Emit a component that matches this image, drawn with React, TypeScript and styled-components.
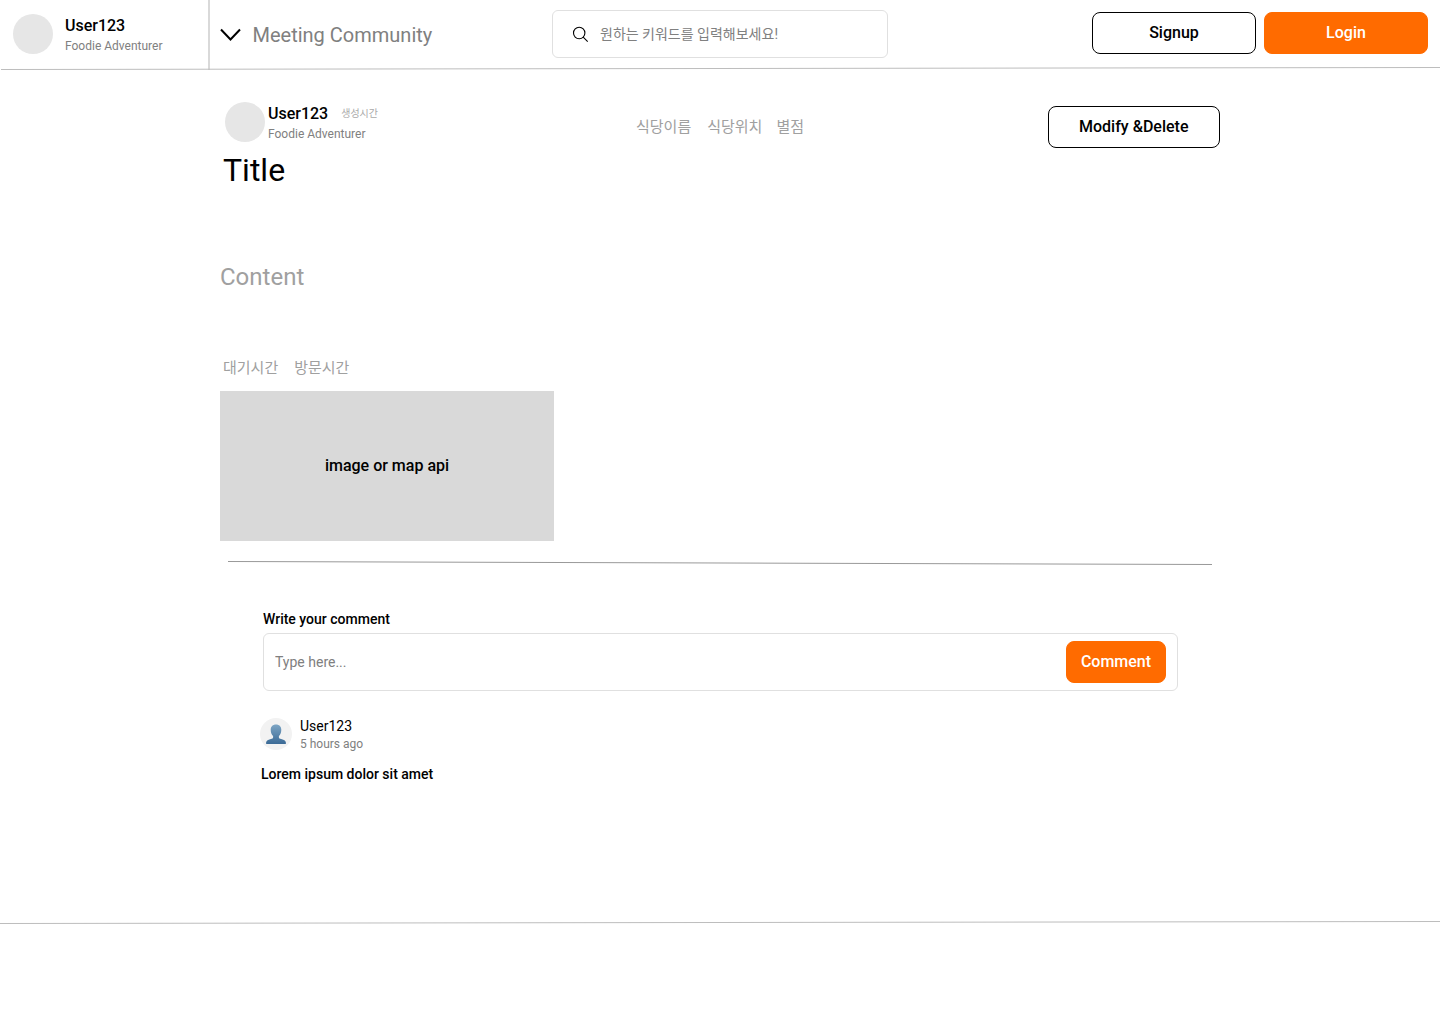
import React from "react";
import styled, { createGlobalStyle } from "styled-components";

const GlobalStyle = createGlobalStyle`
  *, *::before, *::after { box-sizing: border-box; }
  body {
    margin: 0;
    background: #fff;
    color: #000;
    font-family: Roboto, "Noto Sans CJK KR", sans-serif;
  }
  button, input { font-family: inherit; }
`;

const Page = styled.div`
  display: flex;
  flex-direction: column;
  width: 1440px;
  height: 1024px;
  overflow: hidden;
`;

const Header = styled.header`
  display: grid;
  grid-template-columns: 208px 344px 336px 1fr;
  height: 66px;
`;

const ProfileCell = styled.div`
  display: flex;
  gap: 12px;
  padding: 14px 0 0 13px;
`;

const Avatar = styled.div`
  flex: none;
  width: 40px;
  height: 40px;
  border-radius: 50%;
  background: #e6e6e6;
`;

const NameBlock = styled.div`
  display: flex;
  flex-direction: column;
`;

const UserName = styled.span`
  font-size: 16px;
  line-height: 24px;
  font-weight: 500;
`;

const UserRole = styled.span`
  font-size: 12px;
  line-height: 16px;
  color: #808080;
`;

const CommunityCell = styled.div`
  display: flex;
  height: 70px;
  border-left: 2px solid #d9d9d9;
  padding: 0 0 0 10px;
  align-items: center;
`;

const CommunityName = styled.span`
  margin-left: 11.5px;
  font-size: 20px;
  line-height: 28px;
  color: #808080;
`;

const SearchBox = styled.label`
  display: flex;
  align-items: center;
  margin-top: 10px;
  height: 48px;
  padding-left: 19px;
  border: 1px solid #e0e0e0;
  border-radius: 6px;
`;

const TextInput = styled.input<{ $indent: number }>`
  flex: 1;
  min-width: 0;
  border: 0;
  outline: 0;
  background: transparent;
  padding: 0 0 0 ${(p) => p.$indent}px;
  font-size: 14px;
  line-height: 20px;
  &::placeholder { color: #808080; opacity: 1; }
`;

const HeaderActions = styled.div`
  display: flex;
  justify-content: flex-end;
  gap: 8px;
  padding: 12px 12px 0 0;
`;

const Button = styled.button<{ $width: number; $filled?: boolean }>`
  flex: none;
  width: ${(p) => p.$width}px;
  height: 42px;
  padding: 0;
  border: 1px solid ${(p) => (p.$filled ? "#ff6b00" : "#000")};
  border-radius: 8px;
  background: ${(p) => (p.$filled ? "#ff6b00" : "#fff")};
  color: ${(p) => (p.$filled ? "#fff" : "#000")};
  font-size: 16px;
  line-height: 24px;
  font-weight: 500;
`;

const RuleSvg = styled.svg`
  display: block;
  flex: none;
`;

const Main = styled.main`
  display: flex;
  flex-direction: column;
  height: 850px;
  padding: 32px 220px 0;
`;

const PostHeader = styled.div`
  display: grid;
  grid-template-columns: 416px 1fr auto;
  height: 48px;
`;

const Author = styled.div`
  display: flex;
  gap: 3px;
  padding-left: 5px;
`;

const NameRow = styled.div`
  display: flex;
  align-items: center;
  gap: 13px;
`;

const CreatedAt = styled.span`
  font-size: 10px;
  line-height: 14px;
  color: #aaa;
`;

const Tags = styled.div`
  display: flex;
  gap: 16px;
  font-size: 15px;
  line-height: 22px;
  color: #a0a0a0;
`;

const PlaceTags = styled(Tags)`
  padding-top: 14px;
`;

const Rating = styled.span`
  margin-left: -2px;
`;

const TimeTags = styled(Tags)`
  margin-top: 64px;
  padding-left: 3px;
`;

const ModifySlot = styled.div`
  padding-top: 4px;
`;

const Title = styled.h1`
  margin: 0 0 0 3px;
  font-size: 32px;
  line-height: 40px;
  font-weight: 400;
`;

const Content = styled.p`
  margin: 71px 0 0;
  font-size: 24px;
  line-height: 32px;
  color: #a0a0a0;
`;

const MediaBox = styled.div`
  display: flex;
  align-items: center;
  justify-content: center;
  flex: none;
  width: 334px;
  height: 150px;
  margin-top: 12px;
  background: #d9d9d9;
  font-size: 16px;
  line-height: 24px;
  font-weight: 500;
`;

const SectionRule = styled.div`
  margin: 19px 0 0 8px;
`;

const CommentSection = styled.section`
  display: flex;
  flex-direction: column;
  width: 915px;
  margin: 43px 0 0 43px;
`;

const FieldLabel = styled.label`
  font-size: 14px;
  line-height: 20px;
  font-weight: 500;
`;

const CommentBox = styled.div`
  display: flex;
  align-items: center;
  height: 58px;
  margin-top: 4px;
  padding-right: 11px;
  border: 1px solid #e0e0e0;
  border-radius: 6px;
`;

const Comment = styled.article`
  display: flex;
  flex-direction: column;
  margin: 25px 0 0 -3px;
`;

const CommentAuthor = styled.div`
  display: flex;
  align-items: flex-end;
  gap: 8px;
  height: 36px;
`;

const CommentAvatar = styled.svg`
  flex: none;
  margin-bottom: 2px;
`;

const CommentName = styled.span`
  font-size: 14px;
  line-height: 20px;
`;

const CommentText = styled.p`
  margin: 12px 0 0 1px;
  font-size: 14px;
  line-height: 20px;
  font-weight: 500;
`;

type RuleProps = {
  width: number;
  height?: number;
  from: number;
  to: number;
  start?: number;
  color: string;
};

const Rule = ({ width, height = 4, from, to, start = 0, color }: RuleProps) => (
  <RuleSvg width={width} height={height} viewBox={`0 0 ${width} ${height}`}>
    <line x1={start} y1={from} x2={width} y2={to} stroke={color} />
  </RuleSvg>
);

const ChevronIcon = () => (
  <svg width="21" height="14" viewBox="0 0 21 14" fill="none">
    <path d="M1 1.500 10.500 11.500 20 1.500" stroke="#000" strokeWidth="2" />
  </svg>
);

const SearchIcon = () => (
  <svg width="17" height="17" viewBox="0 0 17 17" fill="none" stroke="#000" strokeWidth="1.1">
    <circle cx="7.200" cy="7" r="5.700" />
    <path d="M11.200 11.200 15.700 15.700" />
  </svg>
);

const PersonIcon = () => (
  <CommentAvatar width="32" height="32" viewBox="0 0 32 32">
    <defs>
      <linearGradient id="person" x1="0" y1="0" x2="0" y2="1">
        <stop offset="0" stopColor="#7da5c4" />
        <stop offset="1" stopColor="#3b6a96" />
      </linearGradient>
    </defs>
    <circle cx="16" cy="16" r="16" fill="#f2f2f2" />
    <path
      fill="url(#person)"
      d="M16 6.500c-3.300 0-5.300 2.100-5.300 5.300 0 2.700 1 5 2.400 6.300v1.400c0 .9-.8 1.300-2.300 1.600-3.200.7-4.800 1.900-4.800 4.200 0 .5.200.7.700.7h18.600c.5 0 .7-.2.700-.7 0-2.300-1.600-3.500-4.800-4.200-1.500-.3-2.300-.7-2.300-1.600v-1.400c1.400-1.300 2.400-3.600 2.400-6.300 0-3.200-2-5.300-5.300-5.300z"
    />
  </CommentAvatar>
);

export default function App() {
  return (
    <Page>
      <GlobalStyle />
      <Header>
        <ProfileCell>
          <Avatar />
          <NameBlock>
            <UserName>User123</UserName>
            <UserRole>Foodie Adventurer</UserRole>
          </NameBlock>
        </ProfileCell>
        <CommunityCell>
          <ChevronIcon />
          <CommunityName>Meeting Community</CommunityName>
        </CommunityCell>
        <SearchBox>
          <SearchIcon />
          <TextInput $indent={11} placeholder="원하는 키워드를 입력해보세요!" />
        </SearchBox>
        <HeaderActions>
          <Button $width={164}>Signup</Button>
          <Button $width={164} $filled>Login</Button>
        </HeaderActions>
      </Header>
      <Rule width={1440} start={1} from={3.5} to={1.5} color="#bdbdbd" />
      <Main>
        <PostHeader>
          <Author>
            <Avatar />
            <NameBlock>
              <NameRow>
                <UserName>User123</UserName>
                <CreatedAt>생성시간</CreatedAt>
              </NameRow>
              <UserRole>Foodie Adventurer</UserRole>
            </NameBlock>
          </Author>
          <PlaceTags>
            <span>식당이름</span>
            <span>식당위치</span>
            <Rating>별점</Rating>
          </PlaceTags>
          <ModifySlot>
            <Button $width={172.5}>Modify &amp;Delete</Button>
          </ModifySlot>
        </PostHeader>
        <Title>Title</Title>
        <Content>Content</Content>
        <TimeTags>
          <span>대기시간</span>
          <span>방문시간</span>
        </TimeTags>
        <MediaBox>image or map api</MediaBox>
        <SectionRule>
          <Rule width={984} height={6} from={1.5} to={4.5} color="#999" />
        </SectionRule>
        <CommentSection>
          <FieldLabel htmlFor="comment">Write your comment</FieldLabel>
          <CommentBox>
            <TextInput id="comment" $indent={11} placeholder="Type here..." />
            <Button $width={100} $filled>Comment</Button>
          </CommentBox>
          <Comment>
            <CommentAuthor>
              <PersonIcon />
              <NameBlock>
                <CommentName>User123</CommentName>
                <UserRole>5 hours ago</UserRole>
              </NameBlock>
            </CommentAuthor>
            <CommentText>Lorem ipsum dolor sit amet</CommentText>
          </Comment>
        </CommentSection>
      </Main>
      <Rule width={1440} from={3.5} to={1.5} color="#bdbdbd" />
    </Page>
  );
}
